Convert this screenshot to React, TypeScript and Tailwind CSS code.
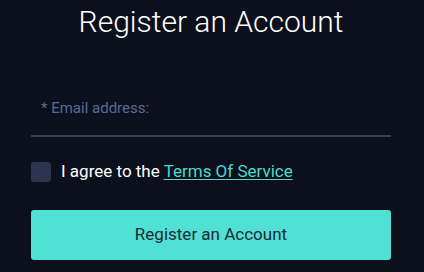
import React from "react";

export default function App() {
  return (
    <div className="w-[424px] h-[272px] bg-[#0c101c] overflow-hidden" style={{ fontFamily: "Roboto, 'Liberation Sans', sans-serif" }}>
      <h1 className="text-center text-white font-light text-[30px] leading-[36px] pt-[4px] pr-[2px]">Register an Account</h1>
      <div className="pl-[31px] pr-[33px] mt-[56px]">
        <div className="border-b-2 border-[#3a3f52] h-[41px] pl-[10px]">
          <span className="text-[#5a6a95] text-[15px] leading-[20px]">* Email address:</span>
        </div>
        <label className="flex items-center mt-[25px] h-[20px]">
          <span className="w-[20px] h-[20px] rounded-[3px] bg-[#2e3450]" />
          <span className="ml-[10px] text-white text-[17px] font-normal">
            I agree to the{" "}
            <a className="text-[#4fd8cf] underline underline-offset-2">Terms Of Service</a>
          </span>
        </label>
        <button className="mt-[28px] w-full h-[50px] rounded-[3px] bg-[#50e0d4] text-[#1c2b33] text-[17px]">Register an Account</button>
      </div>
    </div>
  );
}
